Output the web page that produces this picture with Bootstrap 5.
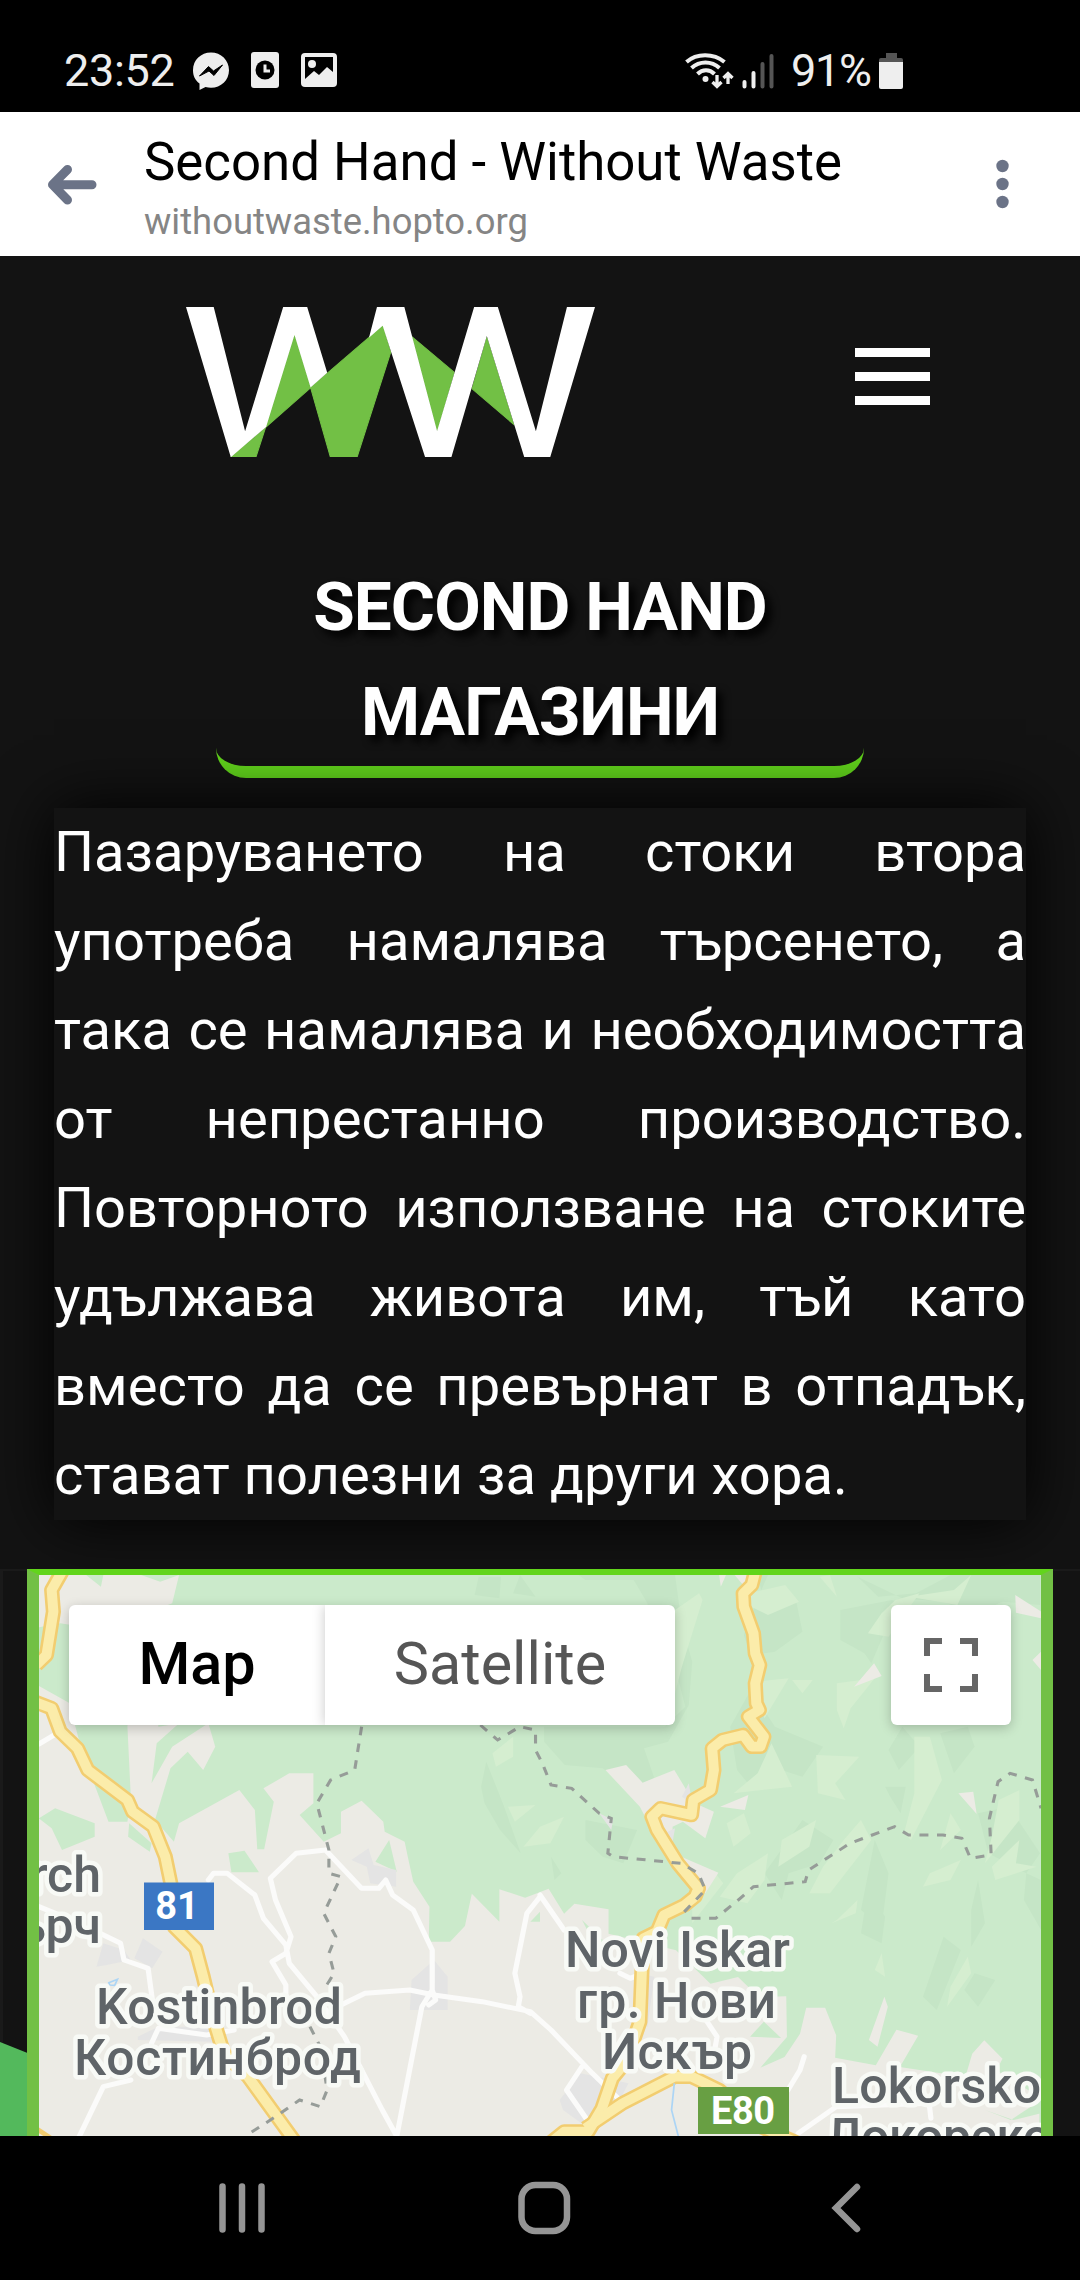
<!DOCTYPE html>
<html lang="bg">
<head>
<meta charset="utf-8">
<meta name="viewport" content="width=device-width, initial-scale=1">
<title>Second Hand - Without Waste</title>
<link href="https://cdn.jsdelivr.net/npm/bootstrap@5.3.0/dist/css/bootstrap.min.css" rel="stylesheet">
<script src="https://cdn.jsdelivr.net/npm/bootstrap@5.3.0/dist/js/bootstrap.bundle.min.js"></script>
<style>
body{font-family:Roboto,"Noto Sans",sans-serif;background:#131313;color:#fff;width:1080px;height:2280px;overflow:hidden}
svg{display:block;flex:none}
.status-bar{height:112px;padding:29px 177px 0 64px;background:#000;color:#eee;font-size:45px;line-height:83px}
.status-time{width:129px;letter-spacing:-.3px}
.status-pct{width:88px;letter-spacing:-1.3px}
.clock-icon{margin:0 22px}
.app-bar{height:144px;padding:19px 71px 0 48px;background:#fff;color:#000}
.app-bar .back-icon{margin:34px 47px 0 0}
.app-bar .dots-icon{margin-top:28px}
.page-title{font-size:52.8px;line-height:62px}
.page-url{font-size:36.4px;line-height:42px;margin-top:8px;color:#858585}
.site-head{height:298px;padding:51px 150px 0 186px}
.burger{width:75px;margin-top:41px;gap:15px}
.burger span{height:9px;background:#fff}
.shop-title{width:648px;height:224px;margin:0 auto;font-size:67.5px;line-height:105px;font-weight:700;letter-spacing:-.9px;text-shadow:6px 6px 9px #000;border-bottom:12px solid #62d51c;border-radius:30px}
.shop-text{width:972px;margin:30px auto 0;font-size:56.15px;line-height:89px;text-align:justify;background:#131313;box-shadow:0 0 60px #000;position:relative}
.map-zone{margin-top:49px;height:567px;overflow:hidden;background:#131313;box-shadow:inset 3px 2px 0 #1a1a1a;padding-left:27px;position:relative}
.map-zone .hill{position:absolute;left:0;bottom:0}
.map-frame{width:1026px;height:700px;border:12px solid #72c045;border-top:6px solid #62d51c;position:relative}
.map-controls{position:absolute;inset:30px 30px auto 30px}
.map-type{width:606px;height:120px;border-radius:6px;overflow:hidden;font-size:59.3px;line-height:118px}
.map-btn{box-shadow:0 3px 12px rgba(0,0,0,.22);border-radius:6px;background:#fff}
.type-map{width:256px;color:#000;font-weight:500}
.type-sat{color:#565656;box-shadow:0 0 12px rgba(0,0,0,.22)}
.full-btn{width:120px;height:120px}
.map-zone text{font-family:Roboto,"Noto Sans",sans-serif}
.place{font-size:50px;font-weight:500;fill:#5f6468;stroke:#f8faf6;stroke-width:9px;stroke-linejoin:round;paint-order:stroke}
.nav-keys{height:144px;background:#000}
</style>
</head>
<body class="d-flex flex-column">
<div class="status-bar d-flex align-items-center justify-content-between">
  <div class="d-flex align-items-center">
    <div class="status-time">23:52</div>
    <svg width="36" height="38" viewBox="0 0 36 38"><path fill="#eee" d="M18 .5C8 .5 0 8 0 18c0 6 2 10 6.500 13.500V38l6-3c2 .5 3.500.7 5.500.7 10 0 18-7.500 18-17.500S28 .5 18 .5z"/><path d="M6.500 24 15.500 14.500l5 4.500 9-6L21 23.500 16 19z" fill="#000" stroke="#000" stroke-width="1"/></svg>
    <svg class="clock-icon" width="28" height="37" viewBox="0 0 28 37"><rect width="28" height="36" rx="3" fill="#eee"/><circle cx="14" cy="18" r="9.500" fill="#000"/><path d="M14 12.500V19h5" stroke="#eee" stroke-width="3" fill="none"/></svg>
    <svg width="36" height="35" viewBox="0 0 36 35"><rect width="36" height="34" rx="4" fill="#eee"/><path d="M4 4h28v15l-6-5-8 8-5-4-9 8z" fill="#000"/><circle cx="11" cy="11" r="4" fill="#eee"/></svg>
  </div>
  <div class="d-flex align-items-center">
    <svg width="106" height="37" viewBox="686 51 106 37" fill="none" stroke="#eee" stroke-width="4"><path d="M687.500 61c10-9 27-9 38 0M692.500 67c8-7.500 20-7.500 28 0M698.500 73c5-5 12-5 17 0"/><circle cx="706.500" cy="78" r="3" fill="#eee" stroke="none"/><path d="M718 74v11M713.500 81l4.500 4.500 4.500-4.500M729 83V72M724.500 77l4.500-4.500 4.500 4.500" stroke-width="3.300"/><g stroke-linecap="round"><path d="M745.500 81v4.500M754.500 72v13.500"/><path d="M763.500 63v22.500M772.500 55v30.500" stroke="#555"/></g></svg>
    <div class="status-pct">91%</div>
    <svg width="24" height="36" viewBox="0 0 24 36"><path fill="#555" d="M7 0h11v5h4q2 0 2 2v4H0V7q0-2 2-2h5z"/><path fill="#eee" d="M0 9h24v25q0 2-2 2H2q-2 0-2-2z"/></svg>
  </div>
</div>
<header class="app-bar d-flex align-items-start">
  <svg class="back-icon" width="49" height="40" viewBox="0 0 49 40" fill="none" stroke="#6b7387" stroke-width="9" stroke-linecap="round" stroke-linejoin="round"><path d="M19.500 4.500 4.500 19.700 19.500 35M6 19.700h38"/></svg>
  <div class="flex-grow-1">
    <div class="page-title">Second Hand - Without Waste</div>
    <div class="page-url">withoutwaste.hopto.org</div>
  </div>
  <svg class="dots-icon" width="13" height="50" viewBox="0 0 13 50" fill="#6b7387"><circle cx="6.500" cy="7" r="6.200"/><circle cx="6.500" cy="25" r="6.200"/><circle cx="6.500" cy="43" r="6.200"/></svg>
</header>
<div class="site-head d-flex align-items-start justify-content-between">
  <svg width="409" height="150" viewBox="108 111 1225 449"><path fill="#72c045" stroke="#72c045" stroke-width="3" d="M433 195l48 158-133 117zM346 473 318 559h-74zM481 352 697 167l24 80L621 559h-81zM786 201l125 105-51 176zM1009 203l80 259-124-106z"/><path fill="#fff" d="M108 111h83l94 372L399 111h72l60 197-50 44-48-157-85 275-105 90h-1zM680 111h82l98 371L971 111h71l114 372L1249 111h84L1199 560h-78L1009 198 903 560h-79L697 167l-41 36z"/></svg>
  <div class="burger d-flex flex-column"><span></span><span></span><span></span></div>
</div>
<h1 class="shop-title text-center">SECOND HAND<br>МАГАЗИНИ</h1>
<p class="shop-text">Пазаруването на стоки втора употреба намалява търсенето, а така се намалява и необходимостта от непрестанно производство. Повторното използване на стоките удължава живота им, тъй като вместо да се превърнат в отпадък, стават полезни за други хора.</p>
<section class="map-zone">
  <svg class="hill" width="30" height="96" viewBox="0 0 30 96"><path d="M0 2 30 14V96H0z" fill="#53b95c"/></svg>
  <div class="map-frame">
    <svg width="1002" height="561" viewBox="39 1575 1002 561">
      <rect x="39" y="1575" width="1002" height="561" fill="#cbeacb"/>
      <g transform="translate(0 1540) scale(.34439 .33333)">
        <!-- terrain shading -->
        <g fill="#c5e5c6">
          <path d="M1390 110h65l-5 65-72-10zM1510 105l45 65-65-10zM1412 665l50 130 50 145-60-70-45-80-10-50zM1680 105h280l20 150 30 110-10 130-60 110-70 20 30 90-70 30-80-60-110-10-60-70V560h350l60-60-30-120-60-50-20-140-40-70h-140zM2230 105h-30l20 90 90-20 20 100-80 60-70 10-20-60 40-110zM2440 210l150-30 80 40-90 30-50 120-20-30-70-40zM2490 110l60 60 110-10 100-55h260v90l-110-10-80 40-90-40-120-10zM2120 560l60-110 70 110 140 60-60 90-90-30-60 60-40-50zM1700 840l150 30-40 100-60-20-50-50zM2220 1000l110-160 90 60-40 70-90 30-20 80zM2540 900l40 100-20 160-60-50zM2570 740l60 0-15 80-30-50zM2840 820l90-20 90 140-40 60-110-60zM2520 1050l50 80-10 80-60-30zM2740 1190l50 40-70 180-40-40zM2830 1300l60 20-50 80-40-50zM2980 1000l43 20v150l-50-90zM1600 950l30 50-20 20zM2620 560l50 60-60 70-30-60zM2730 580l40 120 60-80-20-60zM2820 1110l20-90 20 130-40 70z"/>
        </g>
        <g fill="#d5eed0">
          <path d="M1960 210l70-50 10 20-60 200-20 80zM2150 165l130-30 40 50-90 40-60-30zM2190 425l100-10-70 120zM2300 420h60l-30 40zM2430 430l110-15-70 90-20 60-20-55zM2520 280l40-60 40-40 70-20-90 130zM2370 645l125 5-70 80 30 50-80-20zM2240 610l60 130-170 20 70-60zM2655 590h45l35 130-90 180-20-20 30-120zM2450 900l50-60 30 60-120 160-60 0 40-80zM2110 850l50-30 20 60-50 40zM2270 900l100-60-20 80-90 60zM2140 1000l90-60-10 80-50 70-80-20zM2760 820l30 50-60 60zM2900 780l60-30 0 90-100 130 20-80zM2430 1140l60-60-5 40-70 30zM2560 1240l10 70-30-20zM2810 1250l10 50-70 100 10-60zM2880 980l80-80-10 70 60 10-120 40zM2700 1000l90-40-30 60-80 20zM1430 640l60-50v60l-50 30zM1475 800l80-5-60 50zM1520 920l48-60 70-30-40 80zM2010 1080l60-90 30 40-90 120zM2380 110l50 60-20-65zM2640 170l130-20 50-45-40 90z"/>
        </g>
        <g fill="#ecebe5">
          <path d="M113 105h137l43 35 7-35h110l55 20 55-20-20 85-200 80-125-20-62 12zM113 438l87 50 40 152 75 205h55l10-70-10-215 5-45h80l5 45 60-10-65 60-15 120 60-110 105-70 20 70-35 70-45-55-50 50-45 155 55 65 15-55 175-100 45 60 7 118h20l28-143-30-40 75-45h70v90l-40 35 70 80 50-25v-65l60-33 63 63 4 30 58 30 10 50 15 70 47 75-2 105h62l43-47 20-97 80 84v-97l75 25 38-15 30-12 45 75 30-30 99 17v73l196 50 100 100 80-20 60 60 80-2 2 122-77 92 70-32 45-70 18-78h55l32 83-3 67 118 23 60-107 63 18-53 94 190 30 20-70 35-40 53 55-18 35 125 80v170H113z"/>
          <path d="M1758 690l60-15 48 53 92-38 35 60 25 40 55 25-25 80-65-50-30 15v40h-45l-50-100zM2091 800l82-35-10 45zM2088 105h20l-15 35zM2133 105h45l-20 30zM2948 165l75 50v20l-73-17zM2998 360l25-25v55zM2480 440l58-70 22 38zM2783 760l43-5 10 67zM1978 950l108 48-38 62zM2523 1500l45-130 10 30-30 120z"/>
        </g>
        <g fill="#cbeacb"><path d="M113 835l47-30 115 45v40l-95 40-30-65zM375 850l65 60-5 25-63-45zM663 940l47-8 42 65h-80zM1090 965l40-65 22 95zM2178 1490l40-45 50 49zM2860 1710l75 30 88-60v40l-80 20zM1690 1140l60 60 0 60zM1540 1145l28-30v30z"/></g>
        <g fill="#e4e4e4"><path d="M1020 960l50-35 15 50 65 15v50l-75-10-10-50zM280 1280l20-70 60 20 20 30-70 15zM390 1255l25-60 57 40-30 50zM1190 1410l5-90 65-60 40 50v100zM400 1490l60-30 180 0-20 45-220-5zM1625 1680l60-80 140 30-30 60-80 80-80-60zM1850 1300l50 10-20 150-40-20zM1740 820l40 20-5 30zM1930 880l30-15-10 60zM1980 770l20-40 10 60z"/></g>
        <g fill="none" stroke="#fbfbfa" stroke-width="15" stroke-linejoin="round" stroke-linecap="round">
          <path d="M605 1020l15-20h40l80 65 25 70 65 80 10 55 80 100 80 120 110 220 40 75M945 930l-85 10-75 75 15 65 45 110-15 50-40 25 40 70v35M945 930l105 115h50l20-25 20 45 60 45 55 120v120l-30 50-75 400M990 1395l70-35 130-10 70 15 140 20 140 30 60 55 120 130 85 85M1255 1350l10 30-20 15M1568 1070l-38 50-35 180 15 70-5 30 35 20M113 1100l60 25M290 1180l60 30 10 50 70 25 15 115M440 1510l20-45 140 20 80-15M380 1620l-80 20-70 150M1568 1065l70 105M1690 1580l-45 70 60 90M2050 1440l32 50-5 30M2335 1550l-12 40-35 60M2318 1780l110-80 270-10 5 45M113 612l52-32M1800 1300l30 15 20-8"/>
        </g>
        <g fill="none" stroke-linejoin="round">
          <path d="M100 1762l50 34" stroke="#f2cd70" stroke-width="14"/>
          <g stroke="#f2cd70" stroke-width="44">
            <path d="M180 95l-30 55 5 65-20 130-30 30"/>
            <path d="M100 485l50 20 25 70 50 50 30 65 115 90 15 35 60 45 35 90 30 150-5 60 63 65 22 85 30 130 30 100 70 70 140 200"/>
            <path d="M2193 95l-10 40-25 25 2 40 28 80 5 60 13 35-13 55 3 60 9 20-32 20 45 60-10 30h-25l-25-35-60 15-30 25 5 65-10 60-50 30-5 45-90-20-25 25 15 40 60 100 60 75-10 25-30 25-60 30-20 50-40 20-5 120-5 130-40 120-40 50-30 90-40 70-70 0-60 50"/>
            <path d="M1700 1765l108-75 150-80h50l80 40 120 110 110 50"/>
          </g>
          <g stroke="#fbecaa" stroke-width="29">
            <path d="M180 95l-30 55 5 65-20 130-30 30"/>
            <path d="M100 485l50 20 25 70 50 50 30 65 115 90 15 35 60 45 35 90 30 150-5 60 63 65 22 85 30 130 30 100 70 70 140 200"/>
            <path d="M2193 95l-10 40-25 25 2 40 28 80 5 60 13 35-13 55 3 60 9 20-32 20 45 60-10 30h-25l-25-35-60 15-30 25 5 65-10 60-50 30-5 45-90-20-25 25 15 40 60 100 60 75-10 25-30 25-60 30-20 50-40 20-5 120-5 130-40 120-40 50-30 90-40 70-70 0-60 50"/>
            <path d="M1700 1765l108-75 150-80h50l80 40 120 110 110 50"/>
          </g>
        </g>
        <path fill="none" stroke="#969c98" stroke-width="9" stroke-dasharray="26 25" d="M1050 560l-20 130-70 30-40 70 35 140v70l35 10-50 110 35 70-20 50 15 60-30 50M900 1460l30 60 20 130-20 50-60-20-70 50-90 60M1395 555l50 45 65-40 45 10 0 60 20 40 25 65 60 10 80 75 35 15-10 105 15 10 198 20 50 30 20 50-70 75M2008 1135h70l60-50 50-45 150-15 10-35 120-80 130-50 40 25h100l55 10 25 60 60-10-5-110 25-110 35-25 65 20 25 85"/>
        <path d="M316 1328l25-10-8 18-14-1zM1958 1630l-8 80 20 80" fill="none" stroke="#acd5f5" stroke-width="5"/>
      </g>
      <g class="place">
        <text x="101" y="1892" text-anchor="end">rch</text><text x="101" y="1943" text-anchor="end">ърч</text>
        <text x="96" y="2024" textLength="246">Kostinbrod</text><text x="74" y="2075" textLength="287">Костинброд</text>
        <text x="565" y="1967" textLength="225">Novi Iskar</text><text x="577" y="2018" textLength="199">гр. Нови</text><text x="602" y="2069" textLength="150">Искър</text>
        <text x="832" y="2103" textLength="209">Lokorsko</text><text x="826" y="2154" textLength="225">Локорско</text>
      </g>
      <rect x="144" y="1882.500" width="70" height="47.500" fill="#3b77c4"/><rect x="698" y="2087" width="91" height="47" fill="#689f43"/>
      <g fill="#fff" font-size="38" font-weight="700" text-anchor="middle"><text x="177" y="1919">81</text><text x="743" y="2124" textLength="64">E80</text></g>
    </svg>
    <div class="map-controls d-flex justify-content-between">
      <div class="map-btn"><div class="map-type d-flex text-center"><div class="type-map">Map</div><div class="type-sat flex-fill">Satellite</div></div></div>
      <div class="map-btn full-btn d-flex align-items-center justify-content-center"><svg width="54" height="54" viewBox="0 0 54 54" fill="none" stroke="#666" stroke-width="6"><path d="M3 18V3h15M36 3h15v15M51 36v15H36M18 51H3V36"/></svg></div>
    </div>
  </div>
</section>
<nav class="nav-keys">
  <svg width="1080" height="144" viewBox="0 2136 1080 144" fill="none" stroke="#959595" stroke-width="6.500" stroke-linecap="round"><path d="M222.500 2186.500v43M242 2186.500v43M261.500 2186.500v43"/><rect x="521.500" y="2185" width="45.500" height="46" rx="14"/><path d="M857 2187l-21 21 21 21"/></svg>
</nav>
</body>
</html>
